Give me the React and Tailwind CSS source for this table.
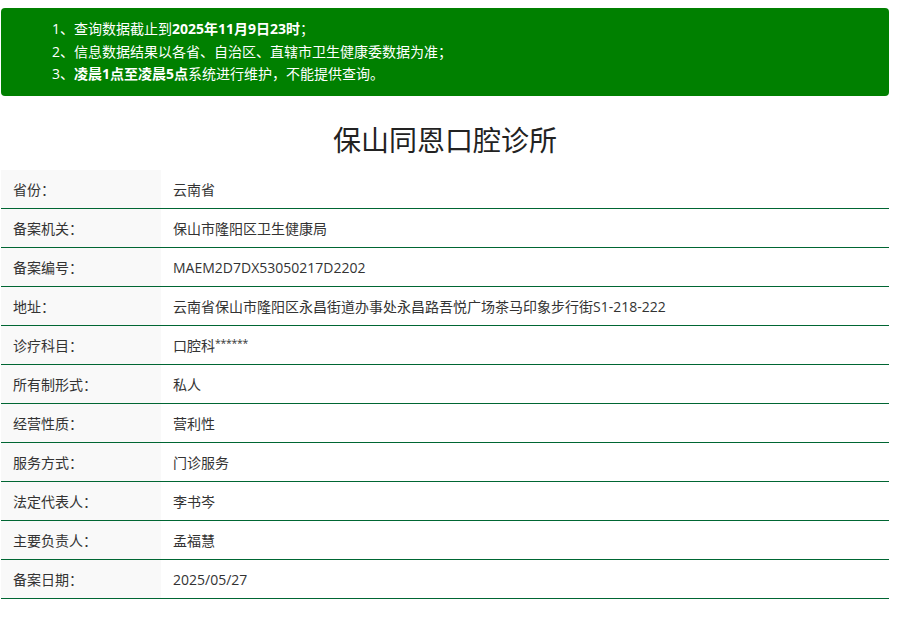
export default function App() {
  const rows = [
    ["省份：", "云南省"],
    ["备案机关：", "保山市隆阳区卫生健康局"],
    ["备案编号：", "MAEM2D7DX53050217D2202"],
    ["地址：", "云南省保山市隆阳区永昌街道办事处永昌路吾悦广场茶马印象步行街S1-218-222"],
    ["诊疗科目：", "口腔科"],
    ["所有制形式：", "私人"],
    ["经营性质：", "营利性"],
    ["服务方式：", "门诊服务"],
    ["法定代表人：", "李书岑"],
    ["主要负责人：", "孟福慧"],
    ["备案日期：", "2025/05/27"],
  ];
  return (
    <div
      className="w-[904px] min-h-[620px] bg-white text-[#333]"
      style={{ fontFamily: '"Open Sans", "Noto Sans CJK SC", sans-serif' }}
    >
      <div className="ml-[1px] w-[888px] pt-[8px]">
        <div className="bg-[#008000] rounded-[4px] py-[10px] pl-[51px] text-white text-[14px] leading-[22.5px] font-normal">
          <div>
            1、查询数据截止到<b className="font-bold">2025年11月9日23时</b>；
          </div>
          <div>2、信息数据结果以各省、自治区、直辖市卫生健康委数据为准；</div>
          <div>
            3、<b className="font-bold">凌晨1点至凌晨5点</b>系统进行维护，不能提供查询。
          </div>
        </div>
        <h1 className="mt-[24px] mb-[10.5px] h-[40px] leading-[40px] text-center text-[28px] font-normal text-[#222]">
          保山同恩口腔诊所
        </h1>
        <div className="flex flex-col">
          {rows.map(([k, v]) => (
            <div key={k} className="flex h-[39px] border-b border-[#006633] text-[14px]">
              <div className="w-[160px] bg-[#f9f9f9] pl-[12px] flex items-center">{k}</div>
              <div className="flex-1 pl-[12px] flex items-center">
                {v}
                {k === "诊疗科目：" && (
                  <span className="text-[10.5px] relative -top-[1px] tracking-[-0.3px]">******</span>
                )}
              </div>
            </div>
          ))}
        </div>
      </div>
    </div>
  );
}
